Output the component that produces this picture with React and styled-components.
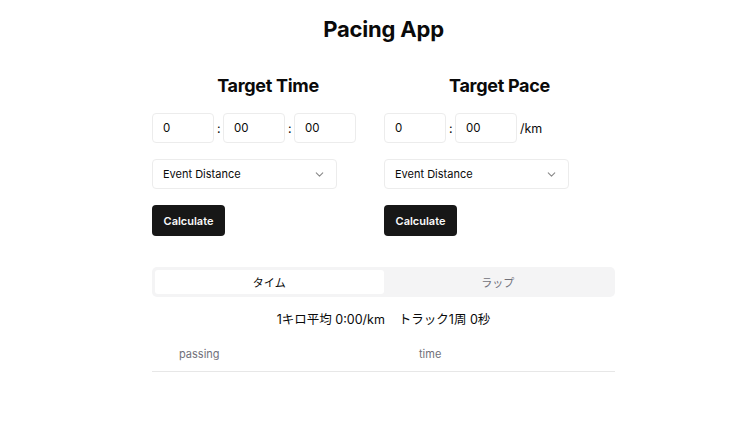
import React, { useState } from 'react'
import styled, { createGlobalStyle } from 'styled-components'
import { ChevronDown } from 'lucide-react'

const GlobalStyle = createGlobalStyle`
  body {
    margin: 0;
    background: #ffffff;
    font-family: Inter, "Noto Sans CJK JP", sans-serif;
    color: #0a0a0a;
  }
`

const Page = styled.div`
  padding: 15px 0 0 17px;
  display: flex;
  flex-direction: column;
  align-items: center;
`

const Title = styled.h1`
  margin: 0;
  font-size: 22px;
  font-weight: 700;
  letter-spacing: -0.2px;
  line-height: 28px;
`

const Main = styled.div`
  width: 463px;
  margin-top: 33px;
`

const Columns = styled.div`
  display: grid;
  grid-template-columns: 232px 231px;
`

const Column = styled.div`
  display: flex;
  flex-direction: column;
`

const Heading = styled.h2`
  margin: 0;
  text-align: center;
  font-size: 18px;
  font-weight: 700;
  letter-spacing: -0.3px;
  line-height: 20px;
`

const InputRow = styled.div`
  display: flex;
  align-items: center;
  gap: 3px;
  margin-top: 17px;
  font-size: 12.5px;
`

const TimeInput = styled.input`
  width: 62px;
  height: 30px;
  box-sizing: border-box;
  border: 1px solid #ececec;
  border-radius: 4px;
  padding: 0 10px;
  font-family: inherit;
  font-size: 11.5px;
  color: #0a0a0a;
  outline: none;
`

const Sep = styled.span`
  width: 3px;
  text-align: center;
`

const Select = styled.div`
  margin-top: 16px;
  width: 185px;
  height: 30px;
  box-sizing: border-box;
  border: 1px solid #ececec;
  border-radius: 4px;
  padding: 0 10px;
  display: flex;
  align-items: center;
  justify-content: space-between;
  font-size: 11px;
`

const Button = styled.button`
  margin-top: 16px;
  width: 73px;
  height: 31px;
  border: none;
  border-radius: 4px;
  background: #171717;
  color: #fafafa;
  font-family: inherit;
  font-size: 11px;
  font-weight: 600;
  cursor: pointer;
`

const Tabs = styled.div`
  margin-top: 31px;
  height: 30px;
  box-sizing: border-box;
  padding: 3px;
  background: #f4f4f5;
  border-radius: 5px;
  display: grid;
  grid-template-columns: 1fr 1fr;
`

const Tab = styled.button`
  border: none;
  border-radius: 3px;
  background: ${p => (p.active ? '#ffffff' : 'transparent')};
  color: ${p => (p.active ? '#0a0a0a' : '#71717a')};
  font-family: inherit;
  font-size: 11px;
  font-weight: 400;
  cursor: pointer;
`

const Summary = styled.p`
  margin: 15px 0 0;
  text-align: center;
  font-size: 12.5px;
  line-height: 16px;
`

const Gap = styled.span`
  display: inline-block;
  width: 14px;
`

const Table = styled.table`
  margin-top: 9px;
  width: 100%;
  border-collapse: collapse;
`

const Th = styled.th`
  text-align: left;
  font-weight: 400;
  font-size: 11px;
  color: #71717a;
  height: 34px;
  padding: 0 0 0 27px;
  border-bottom: 1px solid #e7e7e7;
`

const App = () => {
  const [tab, setTab] = useState('time')

  return (
    <Page>
      <GlobalStyle />
      <Title>Pacing App</Title>
      <Main>
        <Columns>
          <Column>
            <Heading>Target Time</Heading>
            <InputRow>
              <TimeInput defaultValue="0" />
              <Sep>:</Sep>
              <TimeInput defaultValue="00" />
              <Sep>:</Sep>
              <TimeInput defaultValue="00" />
            </InputRow>
            <Select>
              Event Distance
              <ChevronDown size={13} color="#8a8a8a" />
            </Select>
            <Button>Calculate</Button>
          </Column>
          <Column>
            <Heading>Target Pace</Heading>
            <InputRow>
              <TimeInput defaultValue="0" />
              <Sep>:</Sep>
              <TimeInput defaultValue="00" />
              <span>/km</span>
            </InputRow>
            <Select>
              Event Distance
              <ChevronDown size={13} color="#8a8a8a" />
            </Select>
            <Button>Calculate</Button>
          </Column>
        </Columns>
        <Tabs>
          <Tab active={tab === 'time'} onClick={() => setTab('time')}>タイム</Tab>
          <Tab active={tab === 'lap'} onClick={() => setTab('lap')}>ラップ</Tab>
        </Tabs>
        <Summary>
          1キロ平均 0:00/km<Gap />トラック1周 0秒
        </Summary>
        <Table>
          <thead>
            <tr>
              <Th style={{ width: '213px' }}>passing</Th>
              <Th>time</Th>
            </tr>
          </thead>
        </Table>
      </Main>
    </Page>
  )
}

export default App
